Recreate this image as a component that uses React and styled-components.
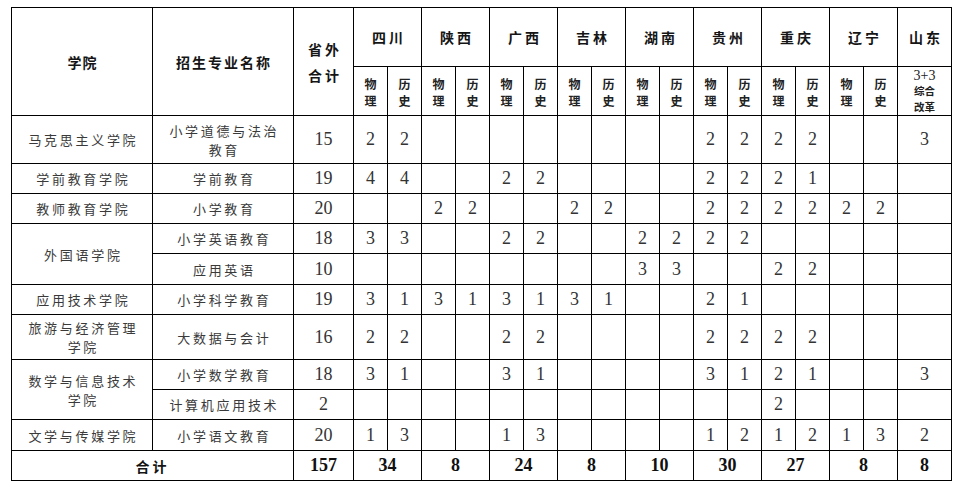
import React from 'react';
import styled, { createGlobalStyle } from 'styled-components';

const Global = createGlobalStyle`
  html, body {
    margin: 0;
    padding: 0;
    background: #fff;
  }
`;

const Page = styled.div`
  padding: 7px 0 0 11px;
  width: 963px;
  height: 491px;
  box-sizing: border-box;
`;

const Table = styled.table`
  border-collapse: collapse;
  table-layout: fixed;
  width: 940px;
  font-family: "Noto Sans CJK SC", "Liberation Serif", sans-serif;
  color: #3a3a3a;
`;

const Row = styled.tr`
  height: ${(p) => p.$h}px;
`;

const Cell = styled.td`
  border: 1px solid #000;
  padding: 0;
  text-align: center;
  vertical-align: middle;
  overflow: hidden;
`;

const HeadCell = styled(Cell)`
  font-weight: 700;
  font-size: 14px;
  letter-spacing: ${(p) => p.$sp || 2}px;
  padding-left: ${(p) => p.$sp || 2}px;
  color: #151515;
  line-height: ${(p) => p.$lh || 20}px;
`;

const SubHeadCell = styled(Cell)`
  font-weight: 700;
  font-size: 12px;
  line-height: 17px;
  color: #222;
  padding-top: 2px;
`;

const ReformCell = styled(Cell)`
  font-weight: 700;
  font-size: 11px;
  color: #222;
`;

const ReformStack = styled.div`
  display: flex;
  flex-direction: column;
  align-items: center;
  gap: 1px;
`;

const ReformLine = styled.span`
  display: block;
  height: ${(p) => (p.$num ? 13 : 15)}px;
  line-height: ${(p) => (p.$num ? 13 : 15)}px;
  font-family: ${(p) => (p.$num ? '"Liberation Serif", serif' : 'inherit')};
  font-weight: ${(p) => (p.$num ? 400 : 700)};
  font-size: ${(p) => (p.$num ? 14 : 10.5)}px;
`;

const NameCell = styled(Cell)`
  font-size: 13px;
  letter-spacing: 2.7px;
  padding-left: 2.7px;
  line-height: 19px;
  font-weight: 400;
`;

const NumCell = styled(Cell)`
  font-family: "Liberation Serif", serif;
  font-size: 18px;
  color: #333;
`;

const TotalLabel = styled(Cell)`
  font-weight: 700;
  font-size: 14px;
  letter-spacing: 3px;
  color: #151515;
`;

const TotalCell = styled(Cell)`
  font-family: "Liberation Serif", serif;
  font-weight: 700;
  font-size: 18px;
  color: #111;
`;

const provinces = ['四川', '陕西', '广西', '吉林', '湖南', '贵州', '重庆', '辽宁'];

const e = '';
const rows = [
  { h: 48, college: ['马克思主义学院'], span: 1, major: ['小学道德与法治', '教育'], total: 15,
    v: [2, 2, e, e, e, e, e, e, e, e, 2, 2, 2, 2, e, e, 3] },
  { h: 30, college: ['学前教育学院'], span: 1, major: ['学前教育'], total: 19,
    v: [4, 4, e, e, 2, 2, e, e, e, e, 2, 2, 2, 1, e, e, e] },
  { h: 30, college: ['教师教育学院'], span: 1, major: ['小学教育'], total: 20,
    v: [e, e, 2, 2, e, e, 2, 2, e, e, 2, 2, 2, 2, 2, 2, e] },
  { h: 30, college: ['外国语学院'], span: 2, major: ['小学英语教育'], total: 18,
    v: [3, 3, e, e, 2, 2, e, e, 2, 2, 2, 2, e, e, e, e, e] },
  { h: 31, college: null, major: ['应用英语'], total: 10,
    v: [e, e, e, e, e, e, e, e, 3, 3, e, e, 2, 2, e, e, e] },
  { h: 30, college: ['应用技术学院'], span: 1, major: ['小学科学教育'], total: 19,
    v: [3, 1, 3, 1, 3, 1, 3, 1, e, e, 2, 1, e, e, e, e, e] },
  { h: 45, college: ['旅游与经济管理', '学院'], span: 1, major: ['大数据与会计'], total: 16,
    v: [2, 2, e, e, 2, 2, e, e, e, e, 2, 2, 2, 2, e, e, e] },
  { h: 30, college: ['数学与信息技术', '学院'], span: 2, major: ['小学数学教育'], total: 18,
    v: [3, 1, e, e, 3, 1, e, e, e, e, 3, 1, 2, 1, e, e, 3] },
  { h: 30, college: null, major: ['计算机应用技术'], total: 2,
    v: [e, e, e, e, e, e, e, e, e, e, e, e, 2, e, e, e, e] },
  { h: 31, college: ['文学与传媒学院'], span: 1, major: ['小学语文教育'], total: 20,
    v: [1, 3, e, e, 1, 3, e, e, e, e, 1, 2, 1, 2, 1, 3, 2] },
];

const totals = [34, 8, 24, 8, 10, 30, 27, 8, 8];

const Lines = ({ items }) =>
  items.map((t, i) => (
    <React.Fragment key={i}>
      {i > 0 && <br />}
      {t}
    </React.Fragment>
  ));

export default function App() {
  return (
    <Page>
      <Global />
      <Table>
        <colgroup>
          <col style={{ width: 141 }} />
          <col style={{ width: 141 }} />
          <col style={{ width: 60 }} />
          {Array.from({ length: 16 }).map((_, i) => (
            <col key={i} style={{ width: 34 }} />
          ))}
          <col style={{ width: 54 }} />
        </colgroup>
        <tbody>
          <Row $h={59}>
            <HeadCell rowSpan={2} $sp={1}>学院</HeadCell>
            <HeadCell rowSpan={2} $sp={2}>招生专业名称</HeadCell>
            <HeadCell rowSpan={2} $sp={3} $lh={26}>省外<br />合计</HeadCell>
            {provinces.map((p) => (
              <HeadCell key={p} colSpan={2} $sp={3}>{p}</HeadCell>
            ))}
            <HeadCell $sp={3}>山东</HeadCell>
          </Row>
          <Row $h={49}>
            {provinces.map((p) => (
              <React.Fragment key={p}>
                <SubHeadCell>物<br />理</SubHeadCell>
                <SubHeadCell>历<br />史</SubHeadCell>
              </React.Fragment>
            ))}
            <ReformCell>
              <ReformStack>
                <ReformLine $num>3+3</ReformLine>
                <ReformLine>综合</ReformLine>
                <ReformLine>改革</ReformLine>
              </ReformStack>
            </ReformCell>
          </Row>
          {rows.map((r, ri) => (
            <Row key={ri} $h={r.h}>
              {r.college && (
                <NameCell rowSpan={r.span}><Lines items={r.college} /></NameCell>
              )}
              <NameCell><Lines items={r.major} /></NameCell>
              <NumCell>{r.total}</NumCell>
              {r.v.map((x, i) => (
                <NumCell key={i}>{x}</NumCell>
              ))}
            </Row>
          ))}
          <Row $h={30}>
            <TotalLabel colSpan={2}>合计</TotalLabel>
            <TotalCell>157</TotalCell>
            {totals.map((t, i) => (
              <TotalCell key={i} colSpan={i < 8 ? 2 : 1}>{t}</TotalCell>
            ))}
          </Row>
        </tbody>
      </Table>
    </Page>
  );
}
